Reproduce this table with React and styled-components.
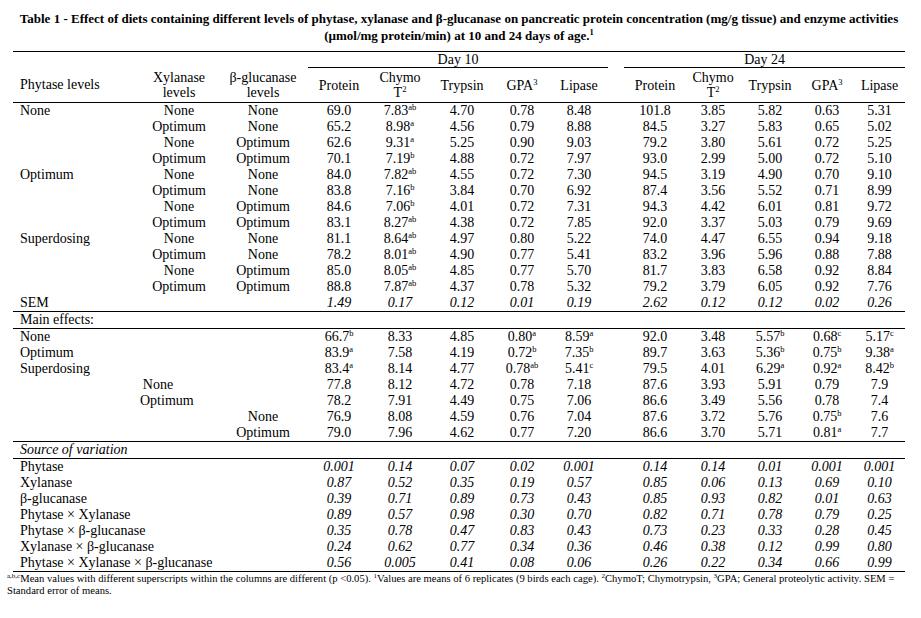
import styled, { createGlobalStyle } from 'styled-components';

const GlobalStyle = createGlobalStyle`
    body {
        margin: 0;
        background: #ffffff;
        color: #000000;
        font-family: "Liberation Serif", "Times New Roman", serif;
    }
`;

const Page = styled.div`
    padding: 10px 0 0 13px;
    width: 892px;
`;

const Title = styled.h1`
    margin: 0 0 7px;
    font-size: 13px;
    line-height: 17px;
    font-weight: bold;
    text-align: center;
`;

const Table = styled.table`
    width: 892px;
    table-layout: fixed;
    border-collapse: collapse;
    font-size: 14px;
`;

const Col = styled.col`
    width: ${p => p.$w}px;
`;

const Row = styled.tr`
    & > td, & > th {
        border-top: ${p => (p.$rule ? '1px solid #000' : 'none')};
        border-bottom: ${p => (p.$bottom ? '1px solid #000' : 'none')};
    }
`;

const HeadCell = styled.th`
    padding: 2px 0;
    font-weight: normal;
    line-height: 15px;
    text-align: ${p => (p.$left ? 'left' : 'center')};
    padding-left: ${p => (p.$left ? '7px' : '0')};
    white-space: nowrap;
`;

const DayCell = styled.th`
    padding: 0;
    height: 15px;
    line-height: 15px;
    font-weight: normal;
    text-align: center;
    && { border-bottom: 1px solid #000; }
`;

const Cell = styled.td`
    padding: 0;
    height: 16px;
    line-height: 16px;
    text-align: ${p => (p.$left ? 'left' : 'center')};
    padding-left: ${p => (p.$left ? '7px' : '0')};
    padding-right: ${p => p.$pr || 0}px;
    font-style: ${p => (p.$italic ? 'italic' : 'normal')};
    white-space: nowrap;
`;

const Sup = styled.sup`
    font-size: 8.5px;
    line-height: 0;
    vertical-align: baseline;
    position: relative;
    top: -5px;
`;

const Note = styled.p`
    margin: 1px 0 0 -6px;
    font-size: 10.6px;
    line-height: 12px;
    white-space: nowrap;
`;

const NoteSup = styled.sup`
    font-size: 7px;
    line-height: 0;
    vertical-align: baseline;
    position: relative;
    top: -4px;
`;

const widths = [127, 78, 90, 62, 60, 64, 56, 58, 16, 62, 54, 60, 54, 51];

const simple = [
    ['None', 'None', 'None', '69.0', '7.83^ab', '4.70', '0.78', '8.48', '101.8', '3.85', '5.82', '0.63', '5.31'],
    ['', 'Optimum', 'None', '65.2', '8.98^a', '4.56', '0.79', '8.88', '84.5', '3.27', '5.83', '0.65', '5.02'],
    ['', 'None', 'Optimum', '62.6', '9.31^a', '5.25', '0.90', '9.03', '79.2', '3.80', '5.61', '0.72', '5.25'],
    ['', 'Optimum', 'Optimum', '70.1', '7.19^b', '4.88', '0.72', '7.97', '93.0', '2.99', '5.00', '0.72', '5.10'],
    ['Optimum', 'None', 'None', '84.0', '7.82^ab', '4.55', '0.72', '7.30', '94.5', '3.19', '4.90', '0.70', '9.10'],
    ['', 'Optimum', 'None', '83.8', '7.16^b', '3.84', '0.70', '6.92', '87.4', '3.56', '5.52', '0.71', '8.99'],
    ['', 'None', 'Optimum', '84.6', '7.06^b', '4.01', '0.72', '7.31', '94.3', '4.42', '6.01', '0.81', '9.72'],
    ['', 'Optimum', 'Optimum', '83.1', '8.27^ab', '4.38', '0.72', '7.85', '92.0', '3.37', '5.03', '0.79', '9.69'],
    ['Superdosing', 'None', 'None', '81.1', '8.64^ab', '4.97', '0.80', '5.22', '74.0', '4.47', '6.55', '0.94', '9.18'],
    ['', 'Optimum', 'None', '78.2', '8.01^ab', '4.90', '0.77', '5.41', '83.2', '3.96', '5.96', '0.88', '7.88'],
    ['', 'None', 'Optimum', '85.0', '8.05^ab', '4.85', '0.77', '5.70', '81.7', '3.83', '6.58', '0.92', '8.84'],
    ['', 'Optimum', 'Optimum', '88.8', '7.87^ab', '4.37', '0.78', '5.32', '79.2', '3.79', '6.05', '0.92', '7.76'],
];

const sem = ['1.49', '0.17', '0.12', '0.01', '0.19', '2.62', '0.12', '0.12', '0.02', '0.26'];

const main = [
    ['None', '', '', '66.7^b', '8.33', '4.85', '0.80^a', '8.59^a', '92.0', '3.48', '5.57^b', '0.68^c', '5.17^c'],
    ['Optimum', '', '', '83.9^a', '7.58', '4.19', '0.72^b', '7.35^b', '89.7', '3.63', '5.36^b', '0.75^b', '9.38^a'],
    ['Superdosing', '', '', '83.4^a', '8.14', '4.77', '0.78^ab', '5.41^c', '79.5', '4.01', '6.29^a', '0.92^a', '8.42^b'],
    ['', 'None', '', '77.8', '8.12', '4.72', '0.78', '7.18', '87.6', '3.93', '5.91', '0.79', '7.9'],
    ['', 'Optimum', '', '78.2', '7.91', '4.49', '0.75', '7.06', '86.6', '3.49', '5.56', '0.78', '7.4'],
    ['', '', 'None', '76.9', '8.08', '4.59', '0.76', '7.04', '87.6', '3.72', '5.76', '0.75^b', '7.6'],
    ['', '', 'Optimum', '79.0', '7.96', '4.62', '0.77', '7.20', '86.6', '3.70', '5.71', '0.81^a', '7.7'],
];

const sources = [
    ['Phytase', '0.001', '0.14', '0.07', '0.02', '0.001', '0.14', '0.14', '0.01', '0.001', '0.001'],
    ['Xylanase', '0.87', '0.52', '0.35', '0.19', '0.57', '0.85', '0.06', '0.13', '0.69', '0.10'],
    ['β-glucanase', '0.39', '0.71', '0.89', '0.73', '0.43', '0.85', '0.93', '0.82', '0.01', '0.63'],
    ['Phytase × Xylanase', '0.89', '0.57', '0.98', '0.30', '0.70', '0.82', '0.71', '0.78', '0.79', '0.25'],
    ['Phytase × β-glucanase', '0.35', '0.78', '0.47', '0.83', '0.43', '0.73', '0.23', '0.33', '0.28', '0.45'],
    ['Xylanase × β-glucanase', '0.24', '0.62', '0.77', '0.34', '0.36', '0.46', '0.38', '0.12', '0.99', '0.80'],
    ['Phytase × Xylanase × β-glucanase', '0.56', '0.005', '0.41', '0.08', '0.06', '0.26', '0.22', '0.34', '0.66', '0.99'],
];

function Val({ v }) {
    const [num, sup] = v.split('^');
    return (
        <>
            {num}
            {sup && <Sup>{sup}</Sup>}
        </>
    );
}

function Values({ list, italic }) {
    return (
        <>
            {list.slice(0, 5).map((v, i) => (
                <Cell key={'a' + i} $italic={italic}><Val v={v} /></Cell>
            ))}
            <Cell />
            {list.slice(5).map((v, i) => (
                <Cell key={'b' + i} $italic={italic}><Val v={v} /></Cell>
            ))}
        </>
    );
}

function App() {
    const heads = (
        <>
            <HeadCell>Protein</HeadCell>
            <HeadCell>Chymo<br />T<Sup>2</Sup></HeadCell>
            <HeadCell>Trypsin</HeadCell>
            <HeadCell>GPA<Sup>3</Sup></HeadCell>
            <HeadCell>Lipase</HeadCell>
        </>
    );

    return (
        <Page>
            <GlobalStyle />
            <Title>
                Table 1 - Effect of diets containing different levels of phytase, xylanase and β-glucanase on pancreatic protein concentration (mg/g tissue) and enzyme activities
                <br />
                (µmol/mg protein/min) at 10 and 24 days of age.<Sup>1</Sup>
            </Title>
            <Table>
                <colgroup>
                    {widths.map((w, i) => <Col key={i} $w={w} />)}
                </colgroup>
                <thead>
                    <Row $rule>
                        <HeadCell />
                        <HeadCell />
                        <HeadCell />
                        <DayCell colSpan={5}>Day 10</DayCell>
                        <HeadCell />
                        <DayCell colSpan={5}>Day 24</DayCell>
                    </Row>
                    <Row $bottom>
                        <HeadCell $left>Phytase levels</HeadCell>
                        <HeadCell>Xylanase<br />levels</HeadCell>
                        <HeadCell>β-glucanase<br />levels</HeadCell>
                        {heads}
                        <HeadCell />
                        {heads}
                    </Row>
                </thead>
                <tbody>
                    {simple.map((r, i) => (
                        <Row key={i}>
                            <Cell $left>{r[0]}</Cell>
                            <Cell>{r[1]}</Cell>
                            <Cell>{r[2]}</Cell>
                            <Values list={r.slice(3)} />
                        </Row>
                    ))}
                    <Row>
                        <Cell $left>SEM</Cell>
                        <Cell />
                        <Cell />
                        <Values list={sem} italic />
                    </Row>
                    <Row $rule>
                        <Cell $left colSpan={14}>Main effects:</Cell>
                    </Row>
                    {main.map((r, i) => (
                        <Row key={i} $rule={i === 0}>
                            <Cell $left>{r[0]}</Cell>
                            <Cell $pr={42}>{r[1]}</Cell>
                            <Cell>{r[2]}</Cell>
                            <Values list={r.slice(3)} />
                        </Row>
                    ))}
                    <Row $rule $bottom>
                        <Cell $left $italic colSpan={14}>Source of variation</Cell>
                    </Row>
                    {sources.map((r, i) => (
                        <Row key={i} $bottom={i === sources.length - 1}>
                            <Cell $left colSpan={3}>{r[0]}</Cell>
                            <Values list={r.slice(1)} italic />
                        </Row>
                    ))}
                </tbody>
            </Table>
            <Note>
                <NoteSup>a,b,c</NoteSup>Mean values with different superscripts within the columns are different (p &lt;0.05). <NoteSup>1</NoteSup>Values are means of 6 replicates (9 birds each cage). <NoteSup>2</NoteSup>ChymoT; Chymotrypsin, <NoteSup>3</NoteSup>GPA; General proteolytic activity. SEM =
                <br />
                Standard error of means.
            </Note>
        </Page>
    );
}

export default App;
